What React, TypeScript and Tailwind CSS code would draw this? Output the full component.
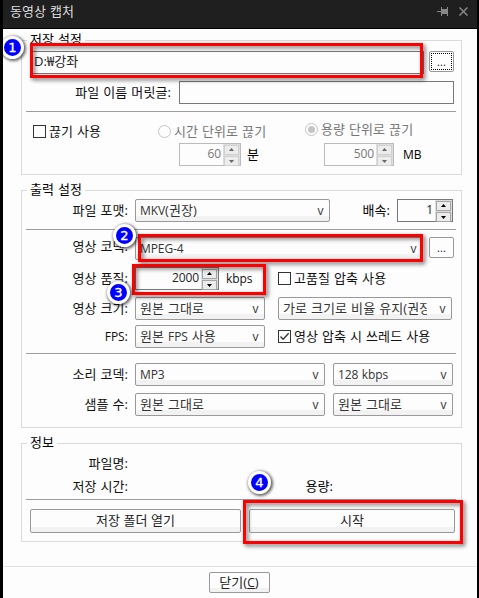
import type { ReactNode } from "react";

const LATIN = /([A-Za-z0-9-]+(?: (?=[A-Za-z]))?)/;

/* Hangul runs a size larger than the latin letters beside it */
function Txt({ children, className = "" }: { children: string; className?: string }) {
  return (
    <span className={`whitespace-pre ${className}`}>
      {children.split(LATIN).map((part, i) =>
        i % 2 ? <span key={i} className="text-[12px] tracking-[-0.1px]">{part}</span> : part
      )}
    </span>
  );
}

function Group({ title, className, children }: { title: string; className: string; children: ReactNode }) {
  return (
    <section className={`relative mx-[18px] w-[441px] border border-[#dadada] ${className}`}>
      <h2 className="absolute -top-[11px] left-[5px] bg-[#fdfdfd] px-[3px] leading-[18px] text-black">
        <Txt>{title}</Txt>
      </h2>
      {children}
    </section>
  );
}

function Row({ className = "", children }: { className?: string; children: ReactNode }) {
  return <div className={`flex h-[23px] items-center ${className}`}>{children}</div>;
}

function Label({ children }: { children: string }) {
  return <Txt className="w-[107px] shrink-0 pr-px pb-px text-right text-[#111]">{children}</Txt>;
}

function Separator({ className }: { className: string }) {
  return <div className={`ml-1 h-px w-[430px] bg-[#9c9c9c] ${className}`} />;
}

function Select({ value, className }: { value: string; className: string }) {
  return (
    <div className={`flex h-[23px] shrink-0 items-center rounded-[2px] border border-[#999] bg-[linear-gradient(#fdfdfd_16px,#f2f2f2_16px)] pl-[4px] text-[#333] ${className}`}>
      <div className="mr-[7px] min-w-0 flex-1 overflow-hidden pb-px leading-[20px]">
        <Txt>{value}</Txt>
      </div>
      <span className="w-[17px] shrink-0 pt-px text-center text-[12px] leading-[20px]">v</span>
    </div>
  );
}

function Spinner({ value, disabled, className }: { value: string; disabled?: boolean; className: string }) {
  const cell = disabled ? "border-[#d0d0d0] bg-[#ececec] text-[#666]" : "border-[#a5a5a5] bg-[#ececec] text-black";
  return (
    <div className={`flex h-[23px] shrink-0 border ${disabled ? "border-[#bbb] text-[#777]" : "border-[#777] text-[#222]"} ${className}`}>
      <Txt className="flex-1 pr-[2px] text-right leading-[19px]">{value}</Txt>
      <div className="flex w-[17px] flex-col gap-px bg-[#ddd] p-px">
        {["M3 5 5.5 2 8 5Z", "M3 3 5.5 6 8 3Z"].map((d) => (
          <div key={d} className={`flex flex-1 items-center justify-center border ${cell}`}>
            <svg width="11" height="8" viewBox="0 0 11 8" fill="currentColor"><path d={d} /></svg>
          </div>
        ))}
      </div>
    </div>
  );
}

function Checkbox({ label, checked }: { label: string; checked?: boolean }) {
  return (
    <div className="flex items-center gap-[3px] text-[#111]">
      <div className="size-[13px] shrink-0 border border-[#333]">
        {checked && (
          <svg width="11" height="11" viewBox="0 0 11 11" fill="none" stroke="#333" strokeWidth="1.3">
            <path d="m1.5 5.5 2.6 2.8 5.6-6" />
          </svg>
        )}
      </div>
      <Txt className="pb-px">{label}</Txt>
    </div>
  );
}

function Radio({ label, checked, className }: { label: string; checked?: boolean; className: string }) {
  return (
    <div className={`flex items-center gap-[3px] text-[#777] ${className}`}>
      <div className="flex size-[13px] shrink-0 items-center justify-center rounded-full border border-[#c4c4c4]">
        {checked && <div className="size-[7px] rounded-full bg-[#c4c4c4]" />}
      </div>
      <Txt className="pb-px">{label}</Txt>
    </div>
  );
}

function Button({ children, className }: { children: ReactNode; className: string }) {
  return (
    <button className={`flex shrink-0 items-center justify-center rounded-[2px] border border-[#999] text-[#222] ${className}`}>
      {children}
    </button>
  );
}

function Highlight({ className }: { className: string }) {
  return <div className={`absolute border-3 border-[#fe0000] [filter:drop-shadow(2px_2px_2px_rgba(0,0,0,0.6))] ${className}`} />;
}

function Badge({ n, className }: { n: number; className: string }) {
  return (
    <div className={`absolute flex size-[23px] items-center justify-center rounded-full border-[3px] border-white bg-[#0000fe] font-['DejaVu_Sans'] text-[13px] leading-none text-white shadow-[1px_1px_3px_1px_rgba(0,0,0,0.6)] [-webkit-text-stroke:0.3px_white] ${className}`}>
      {n}
    </div>
  );
}

export default function App() {
  return (
    <main className="relative h-[598px] w-[479px] overflow-hidden border-r-2 border-l-3 border-black bg-[#fdfdfd] font-['Open_Sans','Noto_Sans_CJK_KR',sans-serif] text-[13px] leading-[18px] tracking-[0.08px] [word-spacing:0.5px]">
      <header className="flex h-[29px] items-center border-b border-black bg-[#1f1f1f] pb-[5px] pl-[7px] text-[#ddd]">
        <Txt className="flex-1 pb-px">동영상 캡처</Txt>
        <svg width="11" height="9" viewBox="0 0 11 9" fill="#888" className="mr-[11px]">
          <path d="M0 4h4v1H0zM4 0h1v9H4zM5 2h5v5H5zM10 0h1v9h-1z" />
        </svg>
        <svg width="9" height="9" viewBox="0 0 9 9" stroke="#888" strokeWidth="1.5" className="mr-[9px]">
          <path d="m.5.5 8 8m0-8-8 8" />
        </svg>
      </header>

      <Group title="저장 설정" className="mt-[11px] h-[135px]">
        <Row className="mt-[10px] items-start pl-2">
          <div className="h-[23px] w-[394px] border border-[#777] pl-[3px] leading-[19px] text-[#222]">D:₩강좌</div>
          <Button className="ml-[5px] h-[21px] w-[25px]">
            <span className="flex h-[17px] w-[21px] justify-center border border-dotted border-black text-[11px] leading-[16px]">...</span>
          </Button>
        </Row>
        <Row className="mt-[7px]">
          <Txt className="w-[150px] pr-px pb-px text-right text-[#111]">파일 이름 머릿글:</Txt>
          <div className="ml-[7px] h-[23px] w-[275px] border border-[#777]" />
        </Row>
        <Separator className="mt-[7px]" />
        <div className="mt-[9px] flex h-[20px] items-center pl-[11px]">
          <div className="w-[125px]"><Checkbox label="끊기 사용" /></div>
          <Radio label="시간 단위로 끊기" className="w-[147px]" />
          <Radio label="용량 단위로 끊기" checked className="-mt-[4px]" />
        </div>
        <Row className="mt-[2px] pl-[157px]">
          <Spinner value="60" disabled className="w-[62px]" />
          <Txt className="w-[83px] pb-px pl-[6px] text-black">분</Txt>
          <Spinner value="500" disabled className="w-[70px]" />
          <Txt className="pl-[9px] text-black">MB</Txt>
        </Row>
      </Group>

      <Group title="출력 설정" className="mt-[15px] h-[238px]">
        <Row className="mt-[8px]">
          <Label>파일 포맷:</Label>
          <Select value="MKV(권장)" className="ml-[6px] w-[195px]" />
          <Txt className="w-[67px] pr-[7px] pb-px text-right text-black">배속:</Txt>
          <Spinner value="1" className="w-[56px]" />
        </Row>
        <Separator className="mt-[7px]" />
        <Row className="mt-[7px] items-start">
          <Label>영상 코덱:</Label>
          <Select value="MPEG-4" className="ml-[6px] w-[288px]" />
          <Button className="ml-[6px] h-[21px] w-[25px] text-[11px]">...</Button>
        </Row>
        <Row className="mt-[7px]">
          <Label>영상 품질:</Label>
          <Spinner value="2000" className="ml-[6px] w-[84px]" />
          <Txt className="w-[59px] pl-[7px] text-[#111]">kbps</Txt>
          <Checkbox label="고품질 압축 사용" />
        </Row>
        <Row className="mt-[7px]">
          <Label>영상 크기:</Label>
          <Select value="원본 그대로" className="ml-[6px] w-[130px]" />
          <Select value="가로 크기로 비율 유지(권장)" className="ml-[13px] w-[174px]" />
        </Row>
        <Row className="mt-[5px]">
          <Label>FPS:</Label>
          <Select value="원본 FPS 사용" className="mr-[13px] ml-[6px] w-[130px]" />
          <Checkbox label="영상 압축 시 쓰레드 사용" checked />
        </Row>
        <Separator className="mt-[5px]" />
        <Row className="mt-[9px]">
          <Label>소리 코덱:</Label>
          <Select value="MP3" className="ml-[6px] w-[190px]" />
          <Select value="128 kbps" className="ml-[8px] w-[120px]" />
        </Row>
        <Row className="mt-[7px]">
          <Label>샘플 수:</Label>
          <Select value="원본 그대로" className="ml-[6px] w-[190px]" />
          <Select value="원본 그대로" className="ml-[8px] w-[120px]" />
        </Row>
      </Group>

      <Group title="정보" className="mt-[15px] h-[99px]">
        <Row className="mt-[8px]"><Label>파일명:</Label></Row>
        <Row>
          <Label>저장 시간:</Label>
          <Txt className="w-[204px] pb-px text-right text-black">용량:</Txt>
        </Row>
        <Separator className="mt-px" />
        <div className="mt-[9px] flex gap-2 pl-2">
          <Button className="h-[24px] w-[211px] bg-[linear-gradient(#fdfdfd_17px,#f2f2f2_17px)] pb-[2px]"><Txt>저장 폴더 열기</Txt></Button>
          <Button className="h-[24px] w-[206px] bg-[linear-gradient(#fdfdfd_17px,#f2f2f2_17px)] pb-[2px]"><Txt>시작</Txt></Button>
        </div>
      </Group>

      <footer className="mt-[24px] flex justify-center border-t border-[#e2e2e2] pt-[5px] pr-[2px]">
        <Button className="h-[21px] w-[61px] bg-[linear-gradient(#fdfdfd_15px,#f2f2f2_15px)]">
          <span>닫기(<u className="text-[12px]">C</u>)</span>
        </Button>
      </footer>

      <Highlight className="top-[43px] left-[27px] h-[35px] w-[393px]" />
      <Highlight className="top-[234px] left-[135px] h-[28px] w-[285px]" />
      <Highlight className="top-[264px] left-[129px] h-[31px] w-[134px]" />
      <Highlight className="top-[500px] left-[240px] h-[44px] w-[220px]" />
      <Badge n={1} className="top-[36px] left-[-2px]" />
      <Badge n={2} className="top-[224px] left-[110px]" />
      <Badge n={3} className="top-[281px] left-[104px]" />
      <Badge n={4} className="top-[471px] left-[245px]" />
    </main>
  );
}
